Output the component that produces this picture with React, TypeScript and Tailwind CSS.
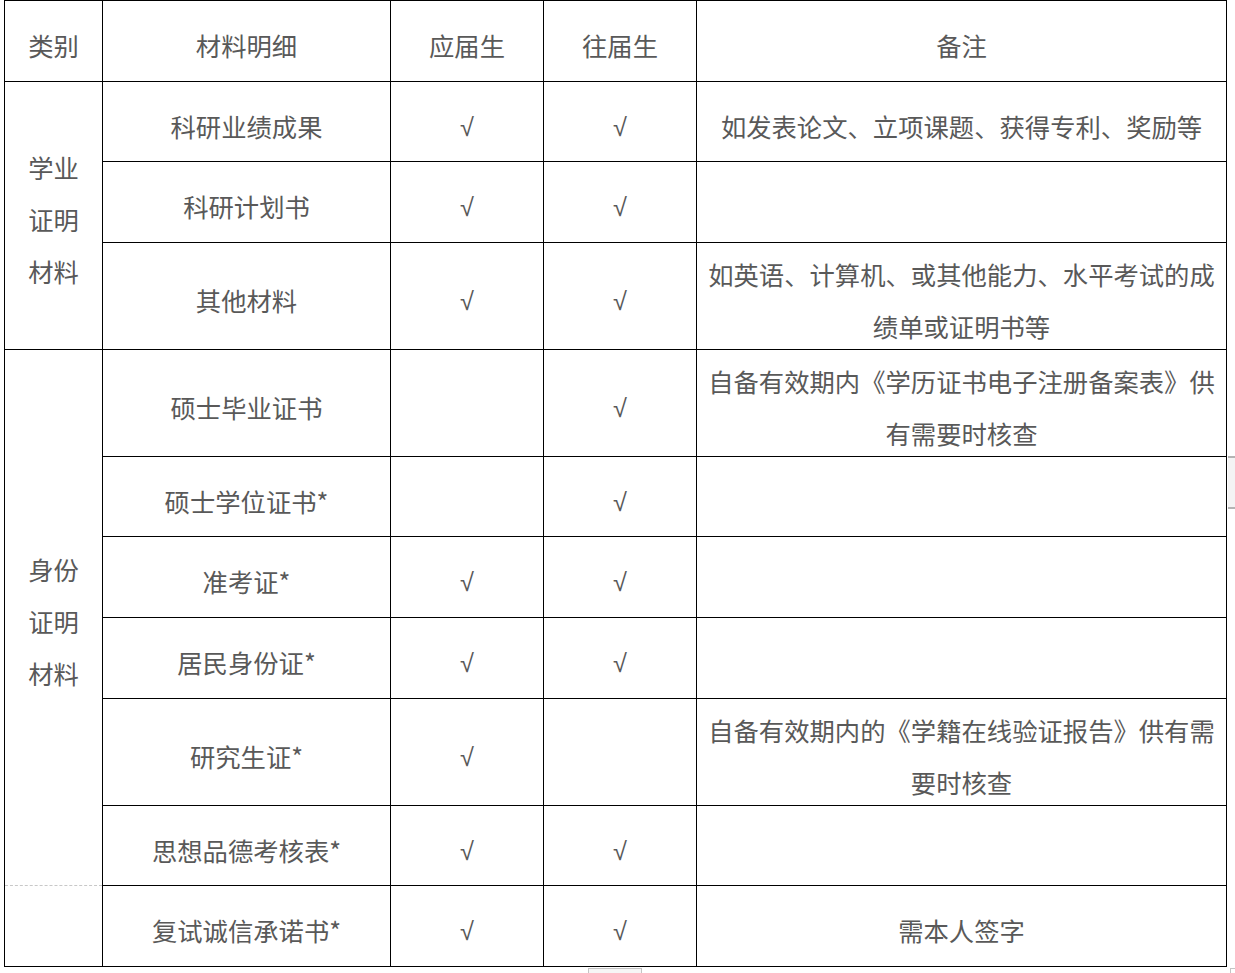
const FONT = { fontFamily: '"Noto Sans CJK SC", "Noto Sans", sans-serif' };

type Row = {
  h: number;
  item: React.ReactNode;
  fresh: boolean;
  past: boolean;
  note?: React.ReactNode;
};

const GROUP1: Row[] = [
  { h: 80, item: "科研业绩成果", fresh: true, past: true, note: "如发表论文、立项课题、获得专利、奖励等" },
  { h: 81, item: "科研计划书", fresh: true, past: true },
  {
    h: 107,
    item: "其他材料",
    fresh: true,
    past: true,
    note: (
      <>
        如英语、计算机、或其他能力、水平考试的成
        <br />
        绩单或证明书等
      </>
    ),
  },
];

const GROUP2: Row[] = [
  {
    h: 107,
    item: "硕士毕业证书",
    fresh: false,
    past: true,
    note: (
      <>
        自备有效期内《学历证书电子注册备案表》供
        <br />
        有需要时核查
      </>
    ),
  },
  { h: 80, item: "硕士学位证书*", fresh: false, past: true },
  { h: 81, item: "准考证*", fresh: true, past: true },
  { h: 81, item: "居民身份证*", fresh: true, past: true },
  {
    h: 107,
    item: "研究生证*",
    fresh: true,
    past: false,
    note: (
      <>
        自备有效期内的《学籍在线验证报告》供有需
        <br />
        要时核查
      </>
    ),
  },
  { h: 80, item: "思想品德考核表*", fresh: true, past: true },
];

const cell = "border border-black text-center align-middle p-0 px-[8px]";

function Td({ children, className = "" }: { children?: React.ReactNode; className?: string }) {
  return (
    <td className={`${cell} ${className}`}>
      <div className="translate-y-[4px] whitespace-nowrap">{children}</div>
    </td>
  );
}

function Check({ on }: { on: boolean }) {
  return on ? <span style={{ fontFamily: '"Liberation Sans", sans-serif' }}>√</span> : null;
}

function Cells({ r }: { r: Row }) {
  return (
    <>
      <Td>{r.item}</Td>
      <Td>
        <Check on={r.fresh} />
      </Td>
      <Td>
        <Check on={r.past} />
      </Td>
      <Td>{r.note}</Td>
    </>
  );
}

export default function App() {
  return (
    <div className="relative h-[973px] w-[1235px] overflow-hidden bg-white" style={FONT}>
      <table className="ml-[4px] w-[1222px] table-fixed border-collapse text-[25.33px] leading-[52px] text-[#595959]">
        <colgroup>
          <col className="w-[98px]" />
          <col className="w-[288px]" />
          <col className="w-[153px]" />
          <col className="w-[153px]" />
          <col className="w-[530px]" />
        </colgroup>
        <tbody>
          <tr className="h-[81px]">
            <Td>类别</Td>
            <Td>材料明细</Td>
            <Td>应届生</Td>
            <Td>往届生</Td>
            <Td>备注</Td>
          </tr>
          {GROUP1.map((r, i) => (
            <tr key={i} style={{ height: r.h }}>
              {i === 0 && (
                <td rowSpan={3} className={cell}>
                  <div className="translate-y-[3px]">
                    学业
                    <br />
                    证明
                    <br />
                    材料
                  </div>
                </td>
              )}
              <Cells r={r} />
            </tr>
          ))}
          {GROUP2.map((r, i) => (
            <tr key={i} style={{ height: r.h }}>
              {i === 0 && (
                <td
                  rowSpan={6}
                  className={`${cell} [border-bottom-style:dashed] [border-bottom-color:#c8c8c8]`}
                >
                  <div className="translate-y-[3px]">
                    身份
                    <br />
                    证明
                    <br />
                    材料
                  </div>
                </td>
              )}
              <Cells r={r} />
            </tr>
          ))}
          <tr className="h-[81px]">
            <Td className="[border-top-style:dashed] [border-top-color:#c8c8c8]" />
            <Td>复试诚信承诺书*</Td>
            <Td>
              <Check on />
            </Td>
            <Td>
              <Check on />
            </Td>
            <Td>需本人签字</Td>
          </tr>
        </tbody>
      </table>

      {/* scrollbar remnants */}
      <div className="absolute left-[1228px] top-[456px] h-[53px] w-[7px] border-y-2 border-[#b4b4b4] bg-[#f4f4f4]" />
      <div className="absolute left-[588px] top-[968px] h-[5px] w-[54px] border-x border-t border-[#c4c4c4] bg-[#f6f6f6]" />
      <div className="absolute left-[1230px] top-[968px] h-[5px] w-[5px] border-l border-t border-[#c4c4c4]" />
    </div>
  );
}
